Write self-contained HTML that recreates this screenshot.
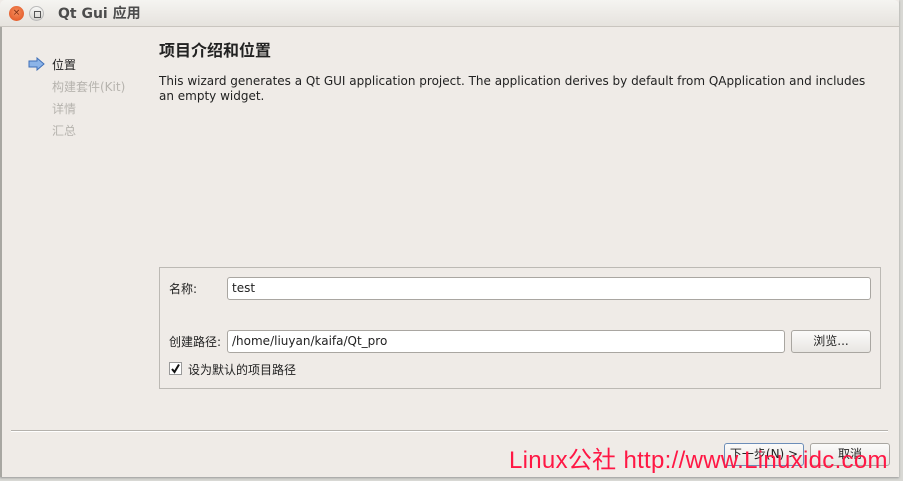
<!DOCTYPE html>
<html><head><meta charset="utf-8"><style>
body{margin:0;width:903px;height:481px;background:#d8d8d4;position:relative;overflow:hidden;font-family:"DejaVu Sans","Noto Sans CJK SC",sans-serif;font-size:12px;color:#222}
.win{position:absolute;left:0;top:0;width:899px;height:477px;background:#efebe7;box-shadow:0 1px 2px #999}
.lb{position:absolute;left:0;top:26px;width:2px;height:451px;background:#a8a7a2}
.title{position:absolute;left:0;top:0;width:899px;height:26px;background:linear-gradient(#f5f4f1,#e6e3de);border-bottom:1px solid #c9c5bf;border-radius:5px 5px 0 0}
.close{position:absolute;left:9px;top:6px;width:15px;height:15px;border-radius:50%;background:radial-gradient(circle at 50% 40%,#f58d5c,#df4f1e);font-size:9px;color:#7a2a10;text-align:center;line-height:15px}
.max{position:absolute;left:29px;top:6px;width:15px;height:15px;border-radius:50%;background:linear-gradient(#f8f8f6,#d6d4d0);border:1px solid #bbb;box-sizing:border-box}
.max:after{content:"";position:absolute;left:4px;top:4px;width:5px;height:5px;border:1px solid #555}
.tt{position:absolute;left:58px;top:3px;font-size:14px;font-weight:bold;color:#4c4c4c}
.t{position:absolute;white-space:nowrap}
.gray{color:#b6b3ae}
.group{position:absolute;left:159px;top:267px;width:722px;height:122px;border:1px solid #bcb9b4;box-sizing:border-box}
.inp{position:absolute;background:#fff;border:1px solid #a9a6a1;border-radius:3px;box-sizing:border-box;padding:2px 4px;font-size:12px;line-height:16px}
.btn{position:absolute;border:1px solid #a9a6a1;border-radius:3px;background:linear-gradient(#fbfbfa,#e8e6e2);box-sizing:border-box;text-align:center;font-size:12px}
</style></head><body>
<div class="win">
<div class="lb"></div>
<div class="title"><div class="close">×</div><div class="max"></div><div class="tt">Qt Gui 应用</div></div>
<svg style="position:absolute;left:28px;top:57px" width="18" height="14"><path d="M1 4h8V1l7 6-7 6v-3H1z" fill="#8cb4e8" stroke="#3f6fb8" stroke-width="1"/></svg>
<div class="t" style="left:52px;top:56px">位置</div>
<div class="t gray" style="left:52px;top:78px">构建套件(Kit)</div>
<div class="t gray" style="left:52px;top:100px">详情</div>
<div class="t gray" style="left:52px;top:122px">汇总</div>
<div class="t" style="left:159px;top:37px;font-size:16px;font-weight:bold">项目介绍和位置</div>
<div class="t" style="left:159px;top:74px;line-height:15px">This wizard generates a Qt GUI application project. The application derives by default from QApplication and includes<br>an empty widget.</div>
<div class="group"></div>
<div class="t" style="left:169px;top:280px">名称:</div>
<div class="inp" style="left:227px;top:277px;width:644px;height:23px">test</div>
<div class="t" style="left:169px;top:333px">创建路径:</div>
<div class="inp" style="left:227px;top:330px;width:558px;height:23px">/home/liuyan/kaifa/Qt_pro</div>
<div class="btn" style="left:791px;top:330px;width:80px;height:23px;line-height:21px">浏览...</div>
<div style="position:absolute;left:169px;top:362px;width:13px;height:13px;background:#fff;border:1px solid #999;box-sizing:border-box"><svg width="11" height="11" style="position:absolute;left:0;top:0"><path d="M2 6l2.5 3L9 1.5" fill="none" stroke="#111" stroke-width="2"/></svg></div>
<div class="t" style="left:188px;top:361px">设为默认的项目路径</div>
<div style="position:absolute;left:11px;top:430px;width:877px;height:1px;background:#b5b2ad"></div>
<div style="position:absolute;left:11px;top:431px;width:877px;height:1px;background:#fff"></div>
<div class="btn" style="left:724px;top:443px;width:80px;height:23px;line-height:21px;border-color:#6c8db8">下一步(N) &gt;</div>
<div class="btn" style="left:810px;top:443px;width:80px;height:23px;line-height:21px">取消</div>
<div class="t" style="left:509px;top:440px;font-size:24px;letter-spacing:0.3px;color:#ff1744;font-family:'Liberation Sans','Noto Sans CJK SC',sans-serif">Linux公社 http://www.Linuxidc.com</div>
</div>
</body></html>
